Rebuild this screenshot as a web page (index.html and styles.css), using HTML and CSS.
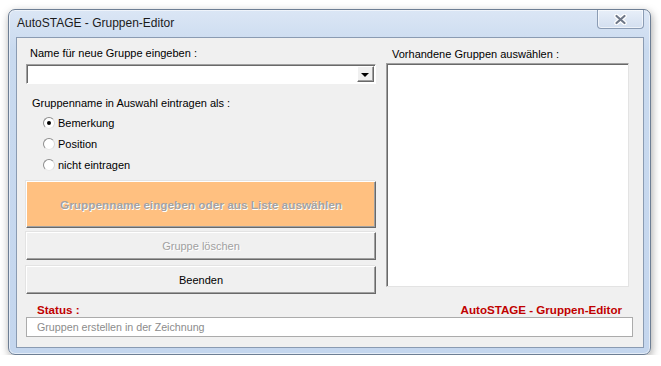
FILE: index.html
```html
<!DOCTYPE html>
<html lang="de">
<head>
    <meta charset="UTF-8">
    <title>AutoSTAGE - Gruppen-Editor</title>
    <link rel="stylesheet" href="styles.css">
</head>
<body>
    <div class="window">
        <div class="titlebar">
            <span class="title">AutoSTAGE - Gruppen-Editor</span>
            <button class="close-btn" title="Schließen">
                <svg width="13" height="11" viewBox="0 0 13 11">
                    <path d="M2.5 2 L10.5 9 M10.5 2 L2.5 9" stroke="#fff" stroke-width="4.5" stroke-linecap="round"/>
                    <path d="M2.5 2 L10.5 9 M10.5 2 L2.5 9" stroke="#6f7888" stroke-width="2.2" stroke-linecap="round"/>
                </svg>
            </button>
        </div>

        <div class="client">
            <div class="columns">
                <div class="left-col">
                    <div class="field-label">Name für neue Gruppe eingeben :</div>
                    <div class="combo">
                        <input type="text" class="combo-input">
                        <span class="combo-btn"><span class="arrow"></span></span>
                    </div>

                    <div class="group-label">Gruppenname in Auswahl eintragen als :</div>
                    <label class="radio-row"><span class="radio checked"></span>Bemerkung</label>
                    <label class="radio-row"><span class="radio"></span>Position</label>
                    <label class="radio-row"><span class="radio"></span>nicht eintragen</label>

                    <button class="btn btn-main" disabled>Gruppenname eingeben oder aus Liste auswählen</button>
                    <button class="btn btn-delete" disabled>Gruppe löschen</button>
                    <button class="btn btn-close">Beenden</button>
                </div>

                <div class="right-col">
                    <div class="field-label list-label">Vorhandene Gruppen auswählen :</div>
                    <div class="listbox"></div>
                </div>
            </div>

            <div class="status-head">
                <span>Status :</span>
                <span>AutoSTAGE - Gruppen-Editor</span>
            </div>
            <div class="status-box">Gruppen erstellen in der Zeichnung</div>
        </div>
    </div>
</body>
</html>
```

FILE: styles.css
```css
body {
    margin: 0;
    background-color: #fff;
    font-family: "Liberation Sans", Arial, sans-serif;
    font-size: 11px;
    color: #000;
}
.window {
    margin: 9px 0 0 8px;
    width: 643px;
    height: 346px;
    box-sizing: border-box;
    border: 1px solid #6d7e94;
    border-radius: 7px;
    background: linear-gradient(#dbe6f5, #c9daef 40px, #c4d6ee);
    box-shadow: 1px 3px 8px rgba(0, 0, 0, 0.35), inset 0 0 0 1px rgba(255, 255, 255, 0.55);
    padding: 0 6px 6px 7px;
    display: flex;
    flex-direction: column;
}
.titlebar {
    height: 27px;
    display: flex;
    justify-content: space-between;
    align-items: flex-start;
}
.title {
    padding: 6px 0 0 1px;
    font-size: 12px;
    color: #1b1b1b;
}
.close-btn {
    width: 47px;
    height: 19px;
    margin: 0;
    padding: 0;
    border: 1px solid #8b9cb4;
    border-top: none;
    border-radius: 0 0 4px 4px;
    background: linear-gradient(#e8eff9, #d3dff0);
    box-shadow: inset 0 0 0 1px rgba(255, 255, 255, 0.6);
    display: flex;
    align-items: center;
    justify-content: center;
}
.client {
    flex: 1;
    border: 1px solid #8a9bb2;
    background-color: #f0f0f0;
    padding: 8px 0 0 9px;
}
.columns {
    display: grid;
    grid-template-columns: 350px 243px;
    column-gap: 10px;
}
.field-label {
    height: 14px;
    line-height: 14px;
    margin: 0 0 4px 4px;
}
.list-label {
    margin: 1px 0 2px 6px;
}
.combo {
    height: 20px;
    box-sizing: border-box;
    border: 1px solid;
    border-color: #a0a0a0 #fff #fff #a0a0a0;
    box-shadow: inset 1px 1px #696969;
    background: #fff;
    display: flex;
    align-items: center;
    padding: 1px 1px 1px 2px;
}
.combo-input {
    flex: 1;
    border: none;
    outline: none;
    height: 14px;
    padding: 0;
    font: inherit;
    background: transparent;
}
.combo-btn {
    width: 17px;
    height: 16px;
    box-sizing: border-box;
    border: 1px solid;
    border-color: #fff #696969 #696969 #fff;
    box-shadow: inset -1px -1px #a0a0a0;
    background: #f0f0f0;
    display: flex;
    align-items: center;
    justify-content: center;
}
.arrow {
    width: 0;
    height: 0;
    border-left: 4px solid transparent;
    border-right: 4px solid transparent;
    border-top: 4px solid #000;
    margin: 1px 1px 0 0;
}
.group-label {
    height: 14px;
    line-height: 14px;
    margin: 12px 0 2px 6px;
}
.radio-row {
    height: 21px;
    display: flex;
    align-items: center;
    padding-left: 17px;
}
.radio {
    width: 12px;
    height: 12px;
    box-sizing: border-box;
    border-radius: 50%;
    border: 1px solid;
    border-color: #8d8d8d #d8d8d8 #e8e8e8 #8d8d8d;
    background: #fff;
    margin-right: 3px;
    display: flex;
    align-items: center;
    justify-content: center;
}
.radio.checked::after {
    content: "";
    width: 4px;
    height: 4px;
    border-radius: 50%;
    background: #000;
}
.btn {
    display: flex;
    align-items: center;
    justify-content: center;
    width: 100%;
    box-sizing: border-box;
    border: 1px solid;
    border-color: #fff #696969 #696969 #fff;
    box-shadow: inset -1px -1px #a0a0a0, -1px -1px #e3e3e3;
    background: #f0f0f0;
    font: inherit;
    color: #000;
    padding: 0;
}
.btn-main {
    height: 47px;
    margin-top: 6px;
    background: #ffc080;
    font-weight: bold;
    font-size: 11.8px;
    color: #a3a3a3;
    text-shadow: 1px 1px #fff;
}
.btn-delete {
    height: 28px;
    margin-top: 4px;
    color: #a0a0a0;
    text-shadow: 1px 1px #fff;
}
.btn-close {
    height: 28px;
    margin-top: 6px;
}
.listbox {
    height: 224px;
    box-sizing: border-box;
    border: 1px solid;
    border-color: #a0a0a0 #e3e3e3 #e3e3e3 #a0a0a0;
    box-shadow: inset 1px 1px #696969;
    background: #fff;
}
.status-head {
    width: 607px;
    box-sizing: border-box;
    height: 14px;
    line-height: 14px;
    margin-top: 9px;
    padding: 0 11px;
    display: flex;
    justify-content: space-between;
    color: #c00000;
    font-weight: bold;
    font-size: 11.6px;
}
.status-box {
    width: 607px;
    height: 20px;
    box-sizing: border-box;
    border: 1px solid #ababab;
    background: #fff;
    line-height: 18px;
    padding-left: 10px;
    color: #8c8c8c;
    font-size: 10.7px;
}
```
